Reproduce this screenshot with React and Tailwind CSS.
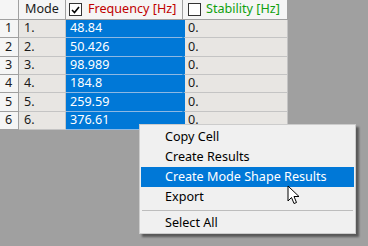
import React from 'react';

const rows = [
  ['1', '1.', '48.84', '0.'],
  ['2', '2.', '50.426', '0.'],
  ['3', '3.', '98.989', '0.'],
  ['4', '4.', '184.8', '0.'],
  ['5', '5.', '259.59', '0.'],
  ['6', '6.', '376.61', '0.'],
];

const menuItems = ['Copy Cell', 'Create Results', 'Create Mode Shape Results', 'Export'];

function CheckBox({ checked }) {
  return (
    <span className="w-[13px] h-[13px] border border-[#333333] bg-white flex items-center justify-center shrink-0">
      {checked && (
        <svg width="9" height="8" viewBox="0 0 9 8">
          <path d="M1 4 L3.5 6.5 L8 1" fill="none" stroke="#000" strokeWidth="1.6" />
        </svg>
      )}
    </span>
  );
}

export default function App() {
  return (
    <div
      className="relative w-[368px] h-[246px] overflow-hidden bg-[#a0a0a0] text-[12.6px] text-black"
      style={{ fontFamily: '"Noto Sans", "Open Sans", sans-serif' }}
    >
      {/* grid */}
      <div className="w-[288px] grid grid-cols-[19px_47px_117px_105px] bg-[#e8e6e3]">
        {/* header */}
        <div className="h-[20px] bg-[#f5f5f5] border-r border-b border-[#a0a0a0]" />
        <div className="h-[20px] bg-[#f5f5f5] border-r border-b border-[#a0a0a0] flex items-center pl-[6px] text-[#1a1a1a]">
          Mode
        </div>
        <div className="h-[20px] bg-[#f5f5f5] border-r border-b border-[#a0a0a0] flex items-center pl-[3px] gap-[6px] text-[#c00000]">
          <CheckBox checked />
          <span>Frequency [Hz]</span>
        </div>
        <div className="h-[20px] bg-[#f5f5f5] border-r border-b border-[#a0a0a0] flex items-center pl-[5px] gap-[5px] text-[#10a010]">
          <CheckBox />
          <span>Stability [Hz]</span>
        </div>

        {rows.map((r) => (
          <React.Fragment key={r[0]}>
            <div className="h-[18.33px] bg-[#f5f5f5] border-r border-b border-[#a0a0a0] flex items-center pl-[5px] text-[#1a1a1a]">
              {r[0]}
            </div>
            <div className="h-[18.33px] border-r border-b border-[#c4c4c4] flex items-center pl-[5px] text-[#1a1a1a]">
              {r[1]}
            </div>
            <div className="h-[18.33px] bg-[#0078d7] border-r border-b border-r-[#0078d7] border-b-[#8db8e3] flex items-center pl-[4px] text-white">
              {r[2]}
            </div>
            <div className="h-[18.33px] border-r border-b border-[#c4c4c4] border-l-[2px] border-l-[#0078d7] flex items-center pl-[3px] text-[#1a1a1a]">
              {r[3]}
            </div>
          </React.Fragment>
        ))}
      </div>

      {/* context menu */}
      <div className="absolute left-[139px] top-[124px] w-[217px] h-[110px] bg-[#f0f0f0] border border-[#cccccc] shadow-[3px_3px_2px_rgba(0,0,0,0.45)] px-[1px] pt-[2px]">
        {menuItems.map((item, i) => (
          <div
            key={item}
            className={
              'h-[20px] flex items-center pl-[24px] ' +
              (i === 2 ? 'bg-[#0078d7] text-white' : 'text-black')
            }
          >
            {item}
          </div>
        ))}
        <div className="h-[6px] flex items-center px-[1px]">
          <div className="w-full h-px bg-[#bdbdbd]" />
        </div>
        <div className="h-[20px] flex items-center pl-[24px]">Select All</div>
      </div>

      {/* mouse pointer */}
      <svg className="absolute left-[287px] top-[185px]" width="14" height="21" viewBox="0 0 14 21">
        <path
          d="M1 1 L1 16 L4.5 12.5 L7 18.5 L9.5 17.5 L7 11.5 L12 11.5 Z"
          fill="#fff"
          stroke="#000"
          strokeWidth="1"
          strokeLinejoin="miter"
        />
      </svg>
    </div>
  );
}
